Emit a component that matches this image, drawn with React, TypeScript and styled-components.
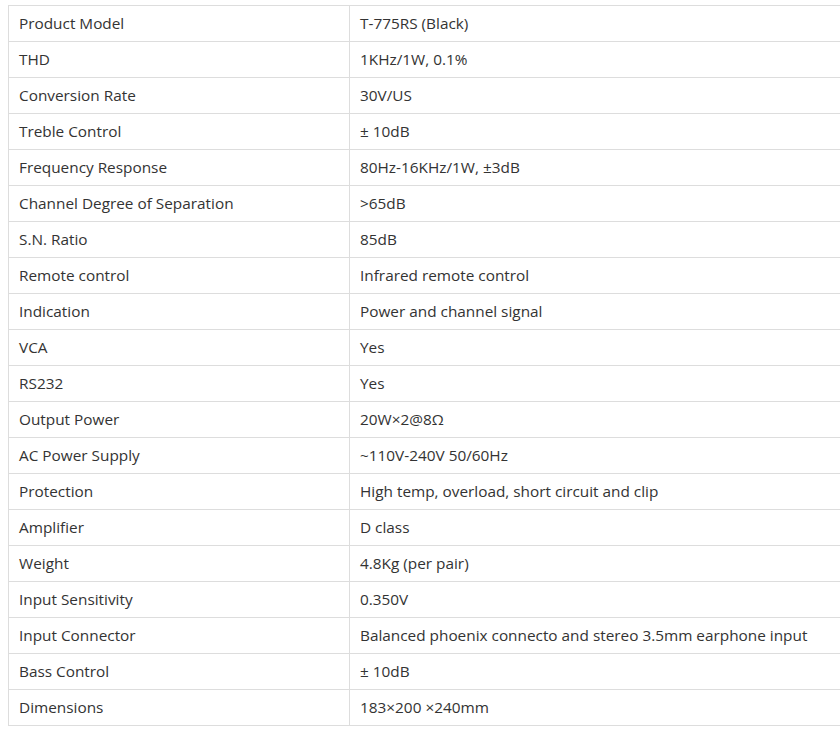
import styled, {createGlobalStyle} from 'styled-components';

const GlobalStyle = createGlobalStyle`
  html, body {
    margin: 0;
    background: #fff;
    overflow: hidden;
  }

  body {
    padding: 5px 0 0 8px;
    font-family: "Open Sans", "Noto Sans", "Liberation Sans", sans-serif;
  }
`;

const Table = styled.table`
  width: 842px;
  border-collapse: collapse;
  table-layout: fixed;
  color: #333;
  font-size: 15.35px;
`;

const Row = styled.tr`
  height: 36px;
`;

const Cell = styled.td<{ $label?: boolean }>`
  width: ${p => (p.$label ? '320px' : 'auto')};
  border: 1px solid #ddd;
  padding: 0 10px 1px;
  line-height: 20px;
  vertical-align: middle;
  white-space: nowrap;
`;

const specs: [string, string][] = [
  ['Product Model', 'T-775RS (Black)'],
  ['THD', '1KHz/1W, 0.1%'],
  ['Conversion Rate', '30V/US'],
  ['Treble Control', '± 10dB'],
  ['Frequency Response', '80Hz-16KHz/1W, ±3dB'],
  ['Channel Degree of Separation', '>65dB'],
  ['S.N. Ratio', '85dB'],
  ['Remote control', 'Infrared remote control'],
  ['Indication', 'Power and channel signal'],
  ['VCA', 'Yes'],
  ['RS232', 'Yes'],
  ['Output Power', '20W×2@8Ω'],
  ['AC Power Supply', '~110V-240V 50/60Hz'],
  ['Protection', 'High temp, overload, short circuit and clip'],
  ['Amplifier', 'D class'],
  ['Weight', '4.8Kg (per pair)'],
  ['Input Sensitivity', '0.350V'],
  ['Input Connector', 'Balanced phoenix connecto and stereo 3.5mm earphone input'],
  ['Bass Control', '± 10dB'],
  ['Dimensions', '183×200 ×240mm'],
];

const App = () => {
  return (
    <>
      <GlobalStyle/>
      <Table>
        <tbody>
          {specs.map(([name, value]) => (
            <Row key={name}>
              <Cell $label>{name}</Cell>
              <Cell>{value}</Cell>
            </Row>
          ))}
        </tbody>
      </Table>
    </>
  );
};

export default App;
